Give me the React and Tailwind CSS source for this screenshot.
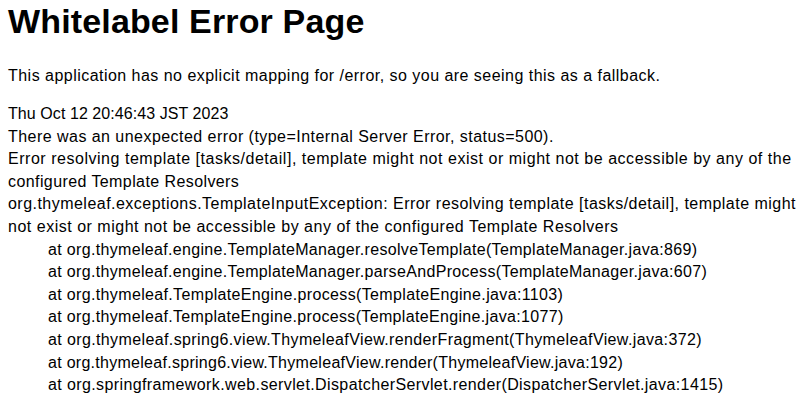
import React from "react";

// each line with its own tracking so widths follow the original rendering
const header = [
  { text: "Thu Oct 12 20:46:43 JST 2023", ls: "tracking-[0.07px]" },
  {
    text: "There was an unexpected error (type=Internal Server Error, status=500).",
    ls: "tracking-[0.46px]",
  },
  {
    text: "Error resolving template [tasks/detail], template might not exist or might not be accessible by any of the",
    ls: "tracking-[0.53px]",
  },
  { text: "configured Template Resolvers", ls: "tracking-[0.41px]" },
  {
    text: "org.thymeleaf.exceptions.TemplateInputException: Error resolving template [tasks/detail], template might",
    ls: "tracking-[0.47px]",
  },
  {
    text: "not exist or might not be accessible by any of the configured Template Resolvers",
    ls: "tracking-[0.51px]",
  },
];

const frames = [
  {
    text: "at org.thymeleaf.engine.TemplateManager.resolveTemplate(TemplateManager.java:869)",
    ls: "tracking-[0.33px]",
  },
  {
    text: "at org.thymeleaf.engine.TemplateManager.parseAndProcess(TemplateManager.java:607)",
    ls: "tracking-[0.33px]",
  },
  {
    text: "at org.thymeleaf.TemplateEngine.process(TemplateEngine.java:1103)",
    ls: "tracking-[0.35px]",
  },
  {
    text: "at org.thymeleaf.TemplateEngine.process(TemplateEngine.java:1077)",
    ls: "tracking-[0.34px]",
  },
  {
    text: "at org.thymeleaf.spring6.view.ThymeleafView.renderFragment(ThymeleafView.java:372)",
    ls: "tracking-[0.38px]",
  },
  {
    text: "at org.thymeleaf.spring6.view.ThymeleafView.render(ThymeleafView.java:192)",
    ls: "tracking-[0.28px]",
  },
  {
    text: "at org.springframework.web.servlet.DispatcherServlet.render(DispatcherServlet.java:1415)",
    ls: "tracking-[0.39px]",
  },
];

const App = () => {
  return (
    <div
      className="w-[800px] h-[404px] overflow-hidden bg-white text-black px-2"
      style={{ fontFamily: '"Liberation Sans", Arial, sans-serif' }}
    >
      <h1 className="pt-[3px] text-[34px] font-bold leading-[37px] tracking-[0.15px] whitespace-nowrap">
        Whitelabel Error Page
      </h1>
      <p className="mt-[25px] text-[16px] leading-[22.6px] tracking-[0.47px] whitespace-nowrap">
        This application has no explicit mapping for /error, so you are seeing
        this as a fallback.
      </p>
      <div className="mt-[15.4px] text-[16px] leading-[22.6px]">
        {header.map((l, i) => (
          <div key={i} className={`whitespace-nowrap ${l.ls}`}>
            {l.text}
          </div>
        ))}
        {frames.map((l, i) => (
          <div key={i} className={`whitespace-nowrap pl-[40px] ${l.ls}`}>
            {l.text}
          </div>
        ))}
      </div>
    </div>
  );
};

export default App;
